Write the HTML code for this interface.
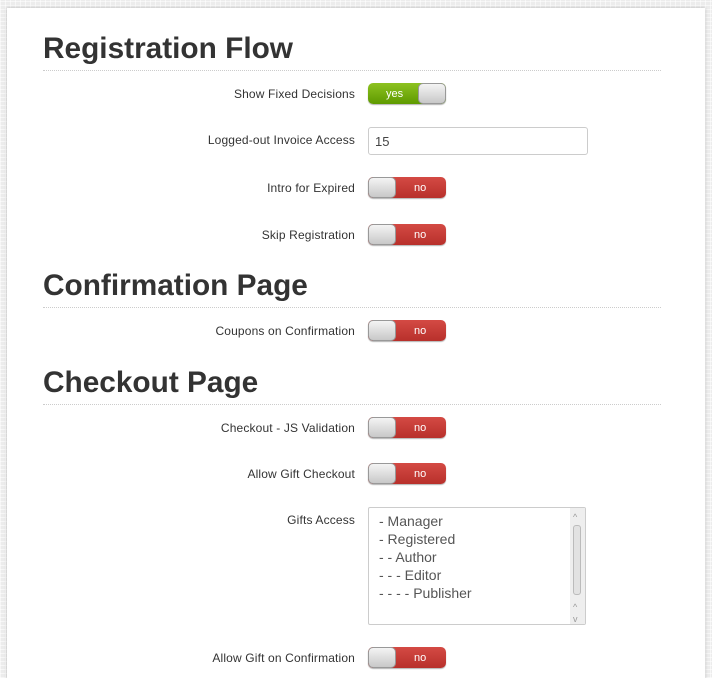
<!DOCTYPE html>
<html><head><style>
html,body{margin:0;width:712px;height:678px;overflow:hidden}
body{background:#ececec;font-family:"Liberation Sans",sans-serif;position:relative;
background-image:repeating-linear-gradient(0deg,rgba(255,255,255,.5) 0 1px,transparent 1px 4px),repeating-linear-gradient(90deg,rgba(255,255,255,.5) 0 1px,transparent 1px 5px);}
.panel{position:absolute;left:7px;top:8px;width:698px;height:680px;background:#fff;box-shadow:0 0 3px rgba(0,0,0,.25);}
h2{position:absolute;left:43px;width:618px;margin:0;font-size:29.8px;font-weight:bold;color:#333;border-bottom:1px dotted #ccc;height:36px;line-height:30px}
.lbl{position:absolute;right:357px;font-size:12px;letter-spacing:0.15px;color:#333;white-space:nowrap}
.tg{position:absolute;left:368px;width:78px;height:21px;border-radius:5px;overflow:hidden;box-shadow:0 1px 1px rgba(0,0,0,.3);font-size:11px;color:#fff}
.tg.no{background:linear-gradient(#d44a44,#b8302b)}
.tg.yes{background:linear-gradient(#8dc220,#5e9a00)}
.tg .k{position:absolute;top:0;width:26px;height:19px;border:1px solid #999;border-radius:5px;background:linear-gradient(#f4f4f4,#c8c8c8)}
.tg.no .k{left:0}.tg.yes .k{right:0}
.tg span{position:absolute;top:5px}
.tg.no span{left:46px}.tg.yes span{left:18px}
</style></head><body>
<div class="panel"></div>
<h2 style="top:34px">Registration Flow</h2>
<div class="lbl" style="top:87px">Show Fixed Decisions</div>
<div class="tg yes" style="top:83px"><span>yes</span><div class="k"></div></div>
<div class="lbl" style="top:133px">Logged-out Invoice Access</div>
<div style="position:absolute;left:368px;top:127px;width:212px;height:26px;border:1px solid #ccc;border-radius:3px;font-size:13px;color:#444;line-height:28px;padding-left:6px">15</div>
<div class="lbl" style="top:181px">Intro for Expired</div>
<div class="tg no" style="top:177px"><div class="k"></div><span>no</span></div>
<div class="lbl" style="top:228px">Skip Registration</div>
<div class="tg no" style="top:224px"><div class="k"></div><span>no</span></div>
<h2 style="top:271px">Confirmation Page</h2>
<div class="lbl" style="top:324px">Coupons on Confirmation</div>
<div class="tg no" style="top:320px"><div class="k"></div><span>no</span></div>
<h2 style="top:368px">Checkout Page</h2>
<div class="lbl" style="top:421px">Checkout - JS Validation</div>
<div class="tg no" style="top:417px"><div class="k"></div><span>no</span></div>
<div class="lbl" style="top:467px">Allow Gift Checkout</div>
<div class="tg no" style="top:463px"><div class="k"></div><span>no</span></div>
<div class="lbl" style="top:513px">Gifts Access</div>
<div style="position:absolute;left:368px;top:507px;width:216px;height:116px;border:1px solid #ccc;border-radius:2px;font-size:14px;color:#555;line-height:18px">
<div style="position:absolute;left:10px;top:4px">- Manager<br>- Registered<br>- - Author<br>- - - Editor<br>- - - - Publisher</div>
<div style="position:absolute;right:0;top:0;width:15px;height:116px;background:#eee">
<div style="position:absolute;left:3px;top:17px;width:6px;height:68px;border:1px solid #bbb;border-radius:3px;background:#e2e2e2"></div>
<div style="position:absolute;left:3px;top:0;font-size:9px;color:#999">^</div>
<div style="position:absolute;left:3px;top:90px;font-size:9px;color:#999">^</div>
<div style="position:absolute;left:3px;top:102px;font-size:9px;color:#999">v</div>
</div></div>
<div class="lbl" style="top:651px">Allow Gift on Confirmation</div>
<div class="tg no" style="top:647px"><div class="k"></div><span>no</span></div>
</body></html>
